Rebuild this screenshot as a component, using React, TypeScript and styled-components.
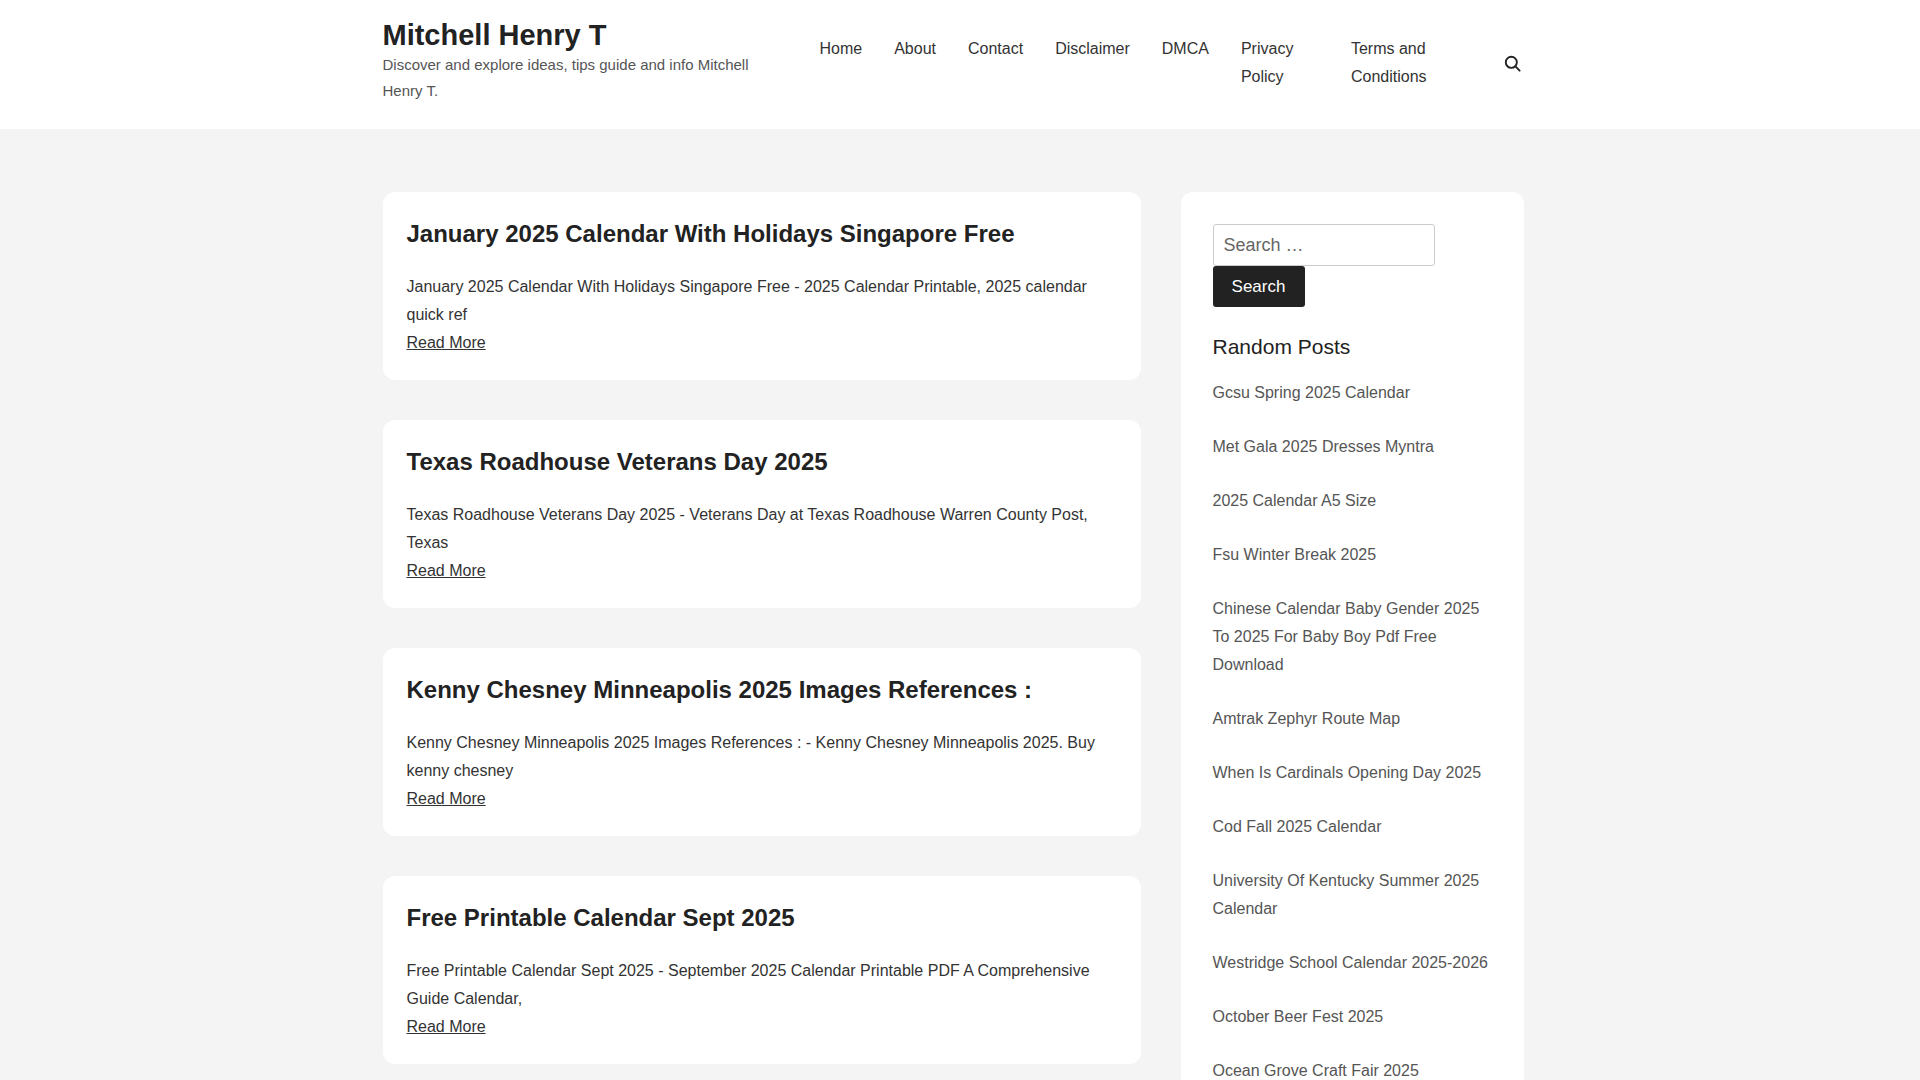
import React from "react";
import styled, { createGlobalStyle } from "styled-components";

const Global = createGlobalStyle`
  body { margin: 0; background: #f4f4f4; font-family: "Liberation Sans", Arial, sans-serif; color: #222; }
  * { box-sizing: border-box; }
`;

const HeaderBar = styled.header`background: #fff; height: 129px;`;
const Wrap = styled.div`width: 1141px; margin: 0 auto; position: relative; left: -7px;`;
const HeaderInner = styled(Wrap)`display: flex; align-items: flex-start; height: 100%; padding-top: 18px;`;
const Brand = styled.div`width: 400px;`;
const SiteTitle = styled.div`font-size: 29px; font-weight: 700; color: #222; line-height: 34px;`;
const Tagline = styled.div`font-size: 15px; color: #555; line-height: 26px; width: 390px;`;
const Nav = styled.nav`display: flex; gap: 32px; margin-left: 37px; padding-top: 17px; align-items: flex-start;`;
const NavItem = styled.a<{ $w?: number }>`font-size: 16px; line-height: 28px; color: #333; ${p => p.$w ? `width:${p.$w}px;` : "white-space:nowrap;"}`;
const SearchIcon = styled.div`margin-left: auto; padding-top: 36px; padding-right: 2px;`;

const Main = styled(Wrap)`display: flex; gap: 40px; padding-top: 63px; align-items: flex-start;`;
const Posts = styled.div`width: 758px; display: flex; flex-direction: column; gap: 40px;`;
const Card = styled.article`background: #fff; border-radius: 12px; padding: 25px 24px 23px;`;
const PostTitle = styled.h2`margin: 0 0 22px; font-size: 24px; line-height: 34px; font-weight: 700; color: #222;`;
const Excerpt = styled.p`margin: 0; font-size: 16px; line-height: 28px; color: #333;`;
const ReadMore = styled.a`font-size: 16px; line-height: 28px; color: #333; text-decoration: underline;`;

const Side = styled.aside`width: 343px; background: #fff; border-radius: 12px; padding: 32px;`;
const Input = styled.input`display: block; width: 222px; height: 42px; border: 1px solid #ccc; border-radius: 3px; padding: 0 10px; font: 18px "Liberation Sans", Arial, sans-serif; color: #333; &::placeholder{color:#666;}`;
const Btn = styled.button`display: block; width: 92px; height: 41px; background: #222; color: #fff; border: 0; border-radius: 3px; font: 17px "Liberation Sans", Arial, sans-serif;`;
const WidgetTitle = styled.h3`margin: 28px 0 20px; font-size: 21px; font-weight: 400; color: #222;`;
const List = styled.ul`list-style: none; margin: 0; padding: 0; display: flex; flex-direction: column; gap: 26px;`;
const Li = styled.li`font-size: 16px; line-height: 28px; color: #555;`;

const posts = [
  ["January 2025 Calendar With Holidays Singapore Free", "January 2025 Calendar With Holidays Singapore Free - 2025 Calendar Printable, 2025 calendar quick ref"],
  ["Texas Roadhouse Veterans Day 2025", "Texas Roadhouse Veterans Day 2025 - Veterans Day at Texas Roadhouse Warren County Post, Texas"],
  ["Kenny Chesney Minneapolis 2025 Images References :", "Kenny Chesney Minneapolis 2025 Images References : - Kenny Chesney Minneapolis 2025. Buy kenny chesney"],
  ["Free Printable Calendar Sept 2025", "Free Printable Calendar Sept 2025 - September 2025 Calendar Printable PDF A Comprehensive Guide Calendar,"],
];
const random = ["Gcsu Spring 2025 Calendar", "Met Gala 2025 Dresses Myntra", "2025 Calendar A5 Size", "Fsu Winter Break 2025", "Chinese Calendar Baby Gender 2025 To 2025 For Baby Boy Pdf Free Download", "Amtrak Zephyr Route Map", "When Is Cardinals Opening Day 2025", "Cod Fall 2025 Calendar", "University Of Kentucky Summer 2025 Calendar", "Westridge School Calendar 2025-2026", "October Beer Fest 2025", "Ocean Grove Craft Fair 2025"];

export default function App() {
  return (
    <>
      <Global />
      <HeaderBar>
        <HeaderInner>
          <Brand>
            <SiteTitle>Mitchell Henry T</SiteTitle>
            <Tagline>Discover and explore ideas, tips guide and info Mitchell Henry T.</Tagline>
          </Brand>
          <Nav>
            <NavItem>Home</NavItem>
            <NavItem>About</NavItem>
            <NavItem>Contact</NavItem>
            <NavItem>Disclaimer</NavItem>
            <NavItem>DMCA</NavItem>
            <NavItem $w={78}>Privacy Policy</NavItem>
            <NavItem $w={90}>Terms and Conditions</NavItem>
          </Nav>
          <SearchIcon>
            <svg width="19" height="19" viewBox="0 0 24 24" fill="none" stroke="#222" strokeWidth="2.4" strokeLinecap="round"><circle cx="10.5" cy="10.5" r="7" /><path d="M16 16l5 5" /></svg>
          </SearchIcon>
        </HeaderInner>
      </HeaderBar>
      <Main>
        <Posts>
          {posts.map(([t, e]) => (
            <Card key={t}>
              <PostTitle>{t}</PostTitle>
              <Excerpt>{e}</Excerpt>
              <ReadMore>Read More</ReadMore>
            </Card>
          ))}
        </Posts>
        <Side>
          <Input placeholder="Search …" />
          <Btn>Search</Btn>
          <WidgetTitle>Random Posts</WidgetTitle>
          <List>{random.map(r => <Li key={r}>{r}</Li>)}</List>
        </Side>
      </Main>
    </>
  );
}
